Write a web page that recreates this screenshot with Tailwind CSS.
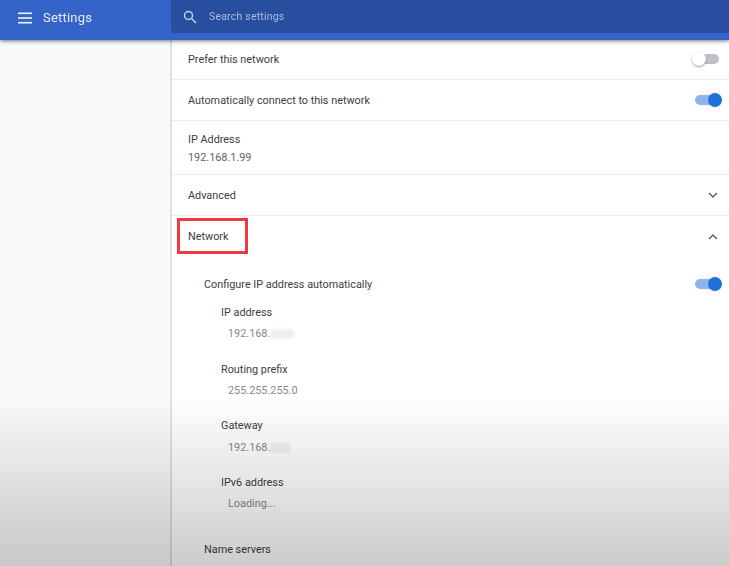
<!doctype html>
<html>

<head>
  <meta charset="UTF-8">
  <meta name="viewport" content="width=device-width, initial-scale=1.0">
  <script src="https://cdn.jsdelivr.net/npm/@tailwindcss/browser@4"></script>
</head>

<body class="relative h-[566px] w-[729px] overflow-hidden bg-white font-['Roboto',sans-serif] text-[10.85px] text-[#3c4043]">
  <div class="blur-[0.35px]">
    <header class="relative z-10 flex h-10 bg-[#3464c8] shadow-[0_1px_4px_rgba(0,0,0,0.55)]">
      <div class="flex w-[171px] items-center pb-[4px] pl-[18px]">
        <svg class="h-[14px] w-[14px]" viewBox="0 0 14 14" fill="#f1f4fb">
          <rect y="1.5" width="14" height="1.6" />
          <rect y="6.2" width="14" height="1.6" />
          <rect y="10.9" width="14" height="1.6" />
        </svg>
        <span class="ml-[11px] text-[13px] tracking-[0.2px] text-[#e8edf8]">Settings</span>
      </div>
      <div class="flex h-[33px] flex-1 items-center rounded-bl-[2px] bg-[#2a4e9f]">
        <svg class="ml-[12px] h-[14px] w-[14px]" viewBox="0 0 14 14" fill="none" stroke="#c3d0ec" stroke-width="1.5">
          <circle cx="5.5" cy="5.5" r="4" />
          <path d="M8.5 8.5 13 13" />
        </svg>
        <span class="ml-[12px] text-[10.5px] tracking-[0.2px] text-[#a9bbe2]">Search settings</span>
      </div>
    </header>

    <div class="flex h-[526px]">
      <aside class="w-[170px] shrink-0 bg-[#f9fafc]"></aside>
      <main class="flex-1 border-l-2 border-[#dedfe2] bg-white">
        <div class="flex h-10 items-center justify-between border-b border-[#ebebeb] pl-[16px] pr-[8px]">
          <span class="mt-[2px]">Prefer this network</span>
          <div class="relative mr-[2px] mb-[2px] h-[10px] w-[24px] rounded-full bg-[#bdc1c6]">
            <div class="absolute top-[-2px] left-[-3px] h-[14px] w-[14px] rounded-full bg-white shadow-[0_1px_2px_rgba(0,0,0,0.4)]"></div>
          </div>
        </div>
        <div class="flex h-[41px] items-center justify-between border-b border-[#ebebeb] pl-[16px] pr-[8px]">
          <span class="mt-[2px]">Automatically connect to this network</span>
          <div class="relative mr-[2px] h-[10px] w-[24px] rounded-full bg-[#8db4ee]">
            <div class="absolute top-[-2px] right-[-3px] h-[14px] w-[14px] rounded-full bg-[#1f6fdc]"></div>
          </div>
        </div>
        <div class="flex h-[54px] flex-col justify-center border-b border-[#ebebeb] pt-[3px] pl-[16px]">
          <span>IP Address</span>
          <span class="mt-[2px] text-[#5f6368]">192.168.1.99</span>
        </div>
        <div class="flex h-[41px] items-center justify-between border-b border-[#ebebeb] pl-[16px] pr-[11px]">
          <span class="mt-[2px]">Advanced</span>
          <svg class="h-[8px] w-[10px]" viewBox="0 0 10 8" fill="none" stroke="#5f6368" stroke-width="1.5">
            <path d="M1 2 5 6 9 2" />
          </svg>
        </div>
        <div class="flex h-[41px] items-center justify-between pl-[16px] pr-[11px]">
          <span class="relative mt-[2px]">Network
            <span class="absolute top-[-11px] left-[-11px] h-[36px] w-[71px] border-[3px] border-[#f03a42]"></span>
          </span>
          <svg class="h-[8px] w-[10px]" viewBox="0 0 10 8" fill="none" stroke="#5f6368" stroke-width="1.5">
            <path d="M1 6 5 2 9 6" />
          </svg>
        </div>

        <div class="flex flex-col pl-[32px]">
          <div class="mb-[-10px] flex h-[57px] items-center justify-between pr-[8px]">
            <span>Configure IP address automatically</span>
            <div class="relative mr-[2px] mb-[3px] h-[10px] w-[24px] rounded-full bg-[#8db4ee]">
              <div class="absolute top-[-2px] right-[-3px] h-[14px] w-[14px] rounded-full bg-[#1f6fdc]"></div>
            </div>
          </div>
          <div class="flex flex-col pl-[17px]">
            <div class="flex h-[56.67px] flex-col pt-[1px]">
              <span>IP address</span>
              <span class="mt-[5px] flex items-center pl-[7px] text-[#85898d]">192.168.<span class="h-[10px] w-[24px] rounded-full bg-[#eeeeee] blur-[1.5px]"></span></span>
            </div>
            <div class="flex h-[56.67px] flex-col pt-[1px]">
              <span>Routing prefix</span>
              <span class="mt-[5px] pl-[7px] text-[#85898d]">255.255.255.0</span>
            </div>
            <div class="flex h-[56.67px] flex-col pt-[1px]">
              <span>Gateway</span>
              <span class="mt-[5px] flex items-center pl-[7px] text-[#85898d]">192.168.<span class="h-[10px] w-[20px] bg-[#f1f1f1] blur-[1px]"></span></span>
            </div>
            <div class="flex h-[68.5px] flex-col pt-[1px]">
              <span>IPv6 address</span>
              <span class="mt-[5px] pl-[7px] text-[#85898d]">Loading...</span>
            </div>
          </div>
          <span>Name servers</span>
        </div>
      </main>
    </div>
  </div>

  <!-- dark fade over the lower part -->
  <div class="pointer-events-none absolute inset-x-0 bottom-0 z-20 h-[170px] bg-gradient-to-b from-black/0 to-black/20"></div>
</body>

</html>
